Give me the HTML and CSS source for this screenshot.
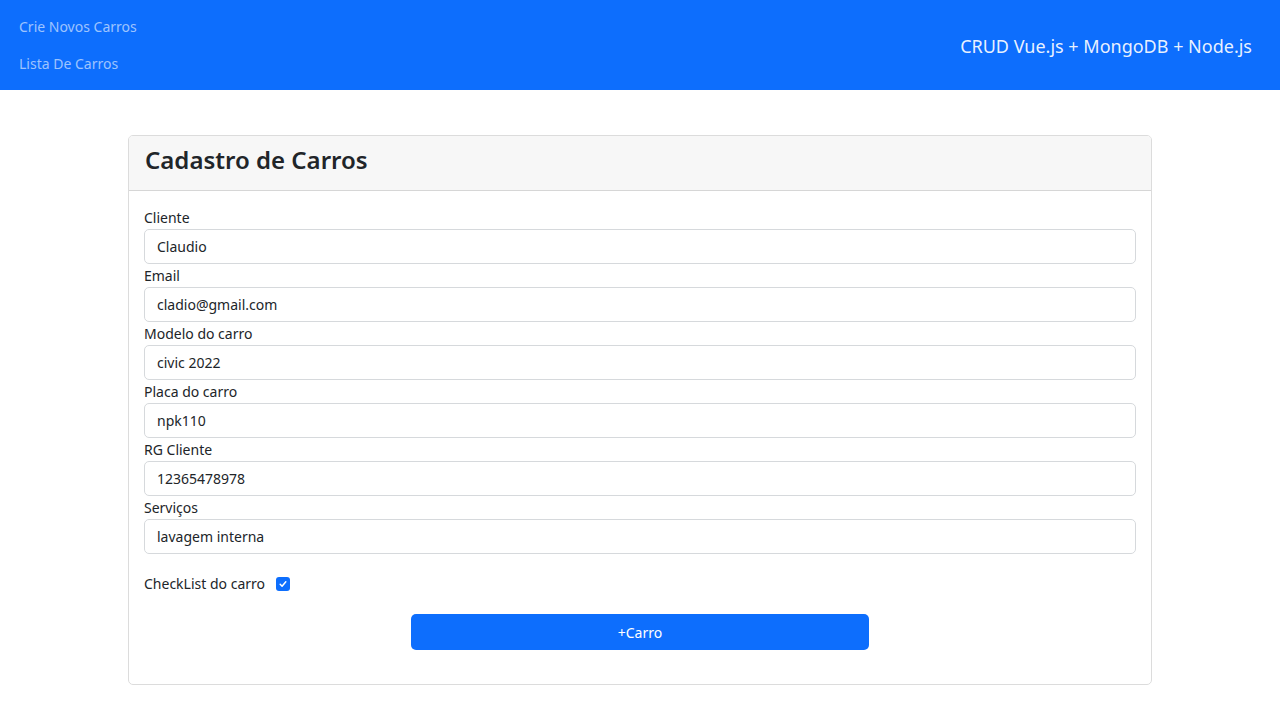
FILE: index.html
```html
<!DOCTYPE html>
<html lang="pt-BR">
<head>
<meta charset="utf-8">
<title>CRUD Vue.js + MongoDB + Node.js</title>
<link rel="stylesheet" href="styles.css">
</head>
<body>
<nav class="navbar">
  <div class="nav-links">
    <a class="nav-link" href="#">Crie Novos Carros</a>
    <a class="nav-link" href="#">Lista De Carros</a>
  </div>
  <div class="brand">CRUD Vue.js + MongoDB + Node.js</div>
</nav>
<main class="container">
  <section class="card">
    <header class="card-header">
      <h2 class="card-title">Cadastro de Carros</h2>
    </header>
    <form class="card-body">
      <div class="field">
        <label class="field-label">Cliente</label>
        <input class="field-input" type="text" value="Claudio">
      </div>
      <div class="field">
        <label class="field-label">Email</label>
        <input class="field-input" type="text" value="cladio@gmail.com">
      </div>
      <div class="field">
        <label class="field-label">Modelo do carro</label>
        <input class="field-input" type="text" value="civic 2022">
      </div>
      <div class="field">
        <label class="field-label">Placa do carro</label>
        <input class="field-input" type="text" value="npk110">
      </div>
      <div class="field">
        <label class="field-label">RG Cliente</label>
        <input class="field-input" type="text" value="12365478978">
      </div>
      <div class="field">
        <label class="field-label">Serviços</label>
        <input class="field-input" type="text" value="lavagem interna">
      </div>
      <div class="check-row">
        <span class="check-label">CheckList do carro</span>
        <span class="check-box">
          <svg viewBox="0 0 16 16" width="10" height="10"><path d="M3.5 8.5l3 3 6-7" fill="none" stroke="#fff" stroke-width="2.4" stroke-linecap="round" stroke-linejoin="round"/></svg>
        </span>
      </div>
      <div class="actions">
        <button class="btn-primary" type="button">+Carro</button>
      </div>
    </form>
  </section>
</main>
</body>
</html>
```

FILE: styles.css
```css
* { box-sizing: border-box; }

body {
  margin: 0;
  background: #fff;
  font-family: "Noto Sans", "Open Sans", sans-serif;
  color: #212529;
  font-size: 15px;
}

.navbar {
  height: 90px;
  background: #0d6efd;
  display: flex;
  align-items: center;
  justify-content: space-between;
  padding: 0 28px 0 19px;
}

.nav-links {
  display: flex;
  flex-direction: column;
  gap: 14px;
  padding-bottom: 1px;
}

.nav-link {
  color: rgba(255, 255, 255, 0.6);
  text-decoration: none;
  font-size: 14px;
  line-height: 23px;
}

.brand {
  color: rgba(255, 255, 255, 0.92);
  font-size: 18px;
  line-height: 24px;
  padding-top: 2px;
}

.container {
  width: 1024px;
  margin: 45px auto 0;
}

.card {
  border: 1px solid #dcdcdc;
  border-radius: 5px;
  overflow: hidden;
}

.card-header {
  height: 55px;
  background: #f7f7f7;
  border-bottom: 1px solid #d6d6d6;
  display: flex;
  align-items: center;
  padding: 0 16px 5px;
}

.card-title {
  margin: 0;
  font-size: 24px;
  font-weight: 600;
  color: #212529;
  line-height: 1.2;
}

.card-body {
  padding: 15px 15px 34px;
  display: flex;
  flex-direction: column;
}

.field {
  display: flex;
  flex-direction: column;
}

.field-label {
  font-size: 14px;
  line-height: 23px;
  color: #212529;
}

.field-input {
  height: 35px;
  border: 1px solid #d6d9dc;
  border-radius: 5px;
  padding: 0 12px;
  font: inherit;
  font-size: 14px;
  color: #212529;
  background: #fff;
}

.check-row {
  margin-top: 18px;
  height: 23px;
  display: flex;
  align-items: center;
  gap: 11px;
}

.check-label {
  font-size: 14px;
  line-height: 23px;
}

.check-box {
  width: 14px;
  height: 14px;
  border-radius: 3px;
  background: #0d6efd;
  display: flex;
  align-items: center;
  justify-content: center;
}

.actions {
  margin-top: 19px;
  display: flex;
  justify-content: center;
}

.btn-primary {
  width: 458px;
  height: 36px;
  background: #0d6efd;
  color: #fff;
  border: none;
  border-radius: 5px;
  font: inherit;
  font-size: 14px;
}
```
